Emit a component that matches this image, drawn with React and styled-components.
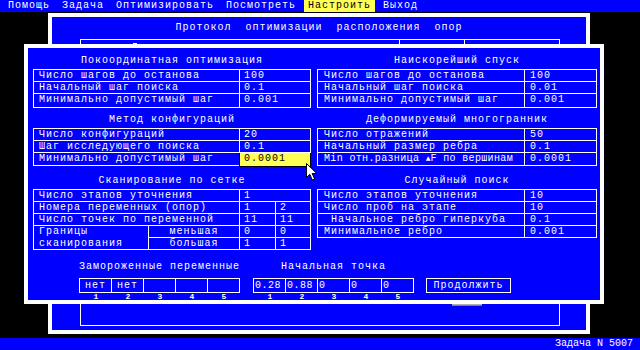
import React from 'react';
import styled, { createGlobalStyle } from 'styled-components';

const BLUE = '#0000ff';
const YELLOW = '#ffff55';
const FONT = '"Liberation Mono", "DejaVu Sans Mono", monospace';

const Global = createGlobalStyle`
  html, body { margin: 0; padding: 0; background: #000; }
  body {
    width: 640px; height: 350px; overflow: hidden;
    font-family: ${FONT}; font-size: 10px; letter-spacing: 1px; color: #fff;
  }
  * { box-sizing: border-box; }
`;

const Screen = styled.div`
  width: 640px; height: 350px; display: flex; flex-direction: column; background: #000;
`;
const MenuBar = styled.div`
  height: 12px; background: ${BLUE}; display: flex; gap: 4px; padding-left: 4px;
  line-height: 12px; white-space: pre;
`;
const MenuItem = styled.span`
  padding: 0 4px;
  background: ${(p) => (p.$active ? YELLOW : 'transparent')};
  color: ${(p) => (p.$active ? '#000' : '#fff')};
`;
const Desktop = styled.div`
  position: relative; flex: 1;
`;
const StatusBar = styled.div`
  height: 12px; background: ${BLUE}; text-align: right; padding-right: 7px; line-height: 12px;
  letter-spacing: 0;
`;

const Window = styled.div`
  position: absolute;
  left: ${(p) => p.$x}px; top: ${(p) => p.$y}px;
  width: ${(p) => p.$w}px; height: ${(p) => p.$h}px;
  background: ${BLUE}; border: 4px solid #fff;
`;

/* background window */
const BgTitle = styled.div`
  height: 22px; line-height: 22px; text-align: center; white-space: pre;
`;
const BgTable = styled.div`
  margin: 0 26px 0 28px; height: 287px; border: 1px solid #fff;
`;
const BgHeader = styled.div`
  display: grid; grid-template-columns: 319px 65px 1fr; height: 14px;
`;
const BgHeadCell = styled.div`
  border-right: ${(p) => (p.$last ? 'none' : '1px solid #fff')};
`;
const Mark = styled.span`
  display: block; width: 4px; height: 2px; background: #fff; margin: 3px 0 0 52px;
`;
const Thumb = styled.div`
  position: absolute; left: 400px; top: 286px; width: 30px; height: 3px;
  background: #b0b0b0; border-bottom: 1px solid #808080;
`;

/* front window */
const Content = styled.div`
  padding: 4px 3px 0 5px;
`;
const SectionRow = styled.div`
  display: flex; gap: 6px; align-items: flex-start; margin-top: ${(p) => p.$mt}px;
`;
const Section = styled.div`
  width: ${(p) => p.$w}px; display: flex; flex-direction: column;
`;
const SectionTitle = styled.div`
  height: 17px; line-height: 17px; text-align: center; white-space: pre;
`;
const Table = styled.div`
  display: grid;
  grid-template-columns: ${(p) => p.$cols};
  grid-template-rows: ${(p) => p.$rows};
  border-top: 1px solid #fff; border-left: 1px solid #fff;
`;
const Cell = styled.div`
  border-right: 1px solid #fff; border-bottom: 1px solid #fff;
  padding-left: ${(p) => (p.$pl !== undefined ? p.$pl : 4)}px;
  line-height: ${(p) => (p.$lh ? p.$lh : 11)}px;
  white-space: pre; overflow: hidden;
  text-align: ${(p) => (p.$center ? 'center' : 'left')};
  grid-column: ${(p) => (p.$cs ? `span ${p.$cs}` : 'auto')};
  grid-row: ${(p) => (p.$rs ? `span ${p.$rs}` : 'auto')};
  letter-spacing: ${(p) => (p.$tight ? '0.35px' : '1px')};
`;
const HotCell = styled(Cell)`
  background: ${YELLOW}; color: #000;
  border-right-color: #000; border-bottom-color: #000;
  box-shadow: -1px 0 0 #000;
  height: 14px;
`;
const Delta = styled.span`
  font-size: 8px; letter-spacing: 0;
`;
const Over = styled.span`
  text-decoration: overline;
`;

const BottomRow = styled.div`
  display: flex; align-items: flex-start; margin-top: 11px; padding-left: 46px;
`;
const Group = styled.div`
  display: flex; flex-direction: column; width: 161px;
  margin-right: ${(p) => p.$mr}px;
`;
const GroupLabel = styled.div`
  height: 12px; line-height: 12px; text-align: center; white-space: pre; margin-bottom: 5px;
`;
const BoxRow = styled.div`
  display: flex; border-top: 1px solid #fff; border-left: 1px solid #fff;
`;
const Box = styled.div`
  width: 32px; height: 14px; line-height: 13px;
  border-right: 1px solid #fff; border-bottom: 1px solid #fff;
  text-align: ${(p) => (p.$center ? 'center' : 'left')};
  padding-left: ${(p) => (p.$center ? 0 : 1)}px;
  letter-spacing: ${(p) => (p.$center ? 1 : 0.5)}px;
`;
const NumRow = styled.div`
  display: flex; padding-left: 1px;
`;
const Num = styled.div`
  width: 32px; text-align: center; font-size: 8px; font-weight: bold;
  line-height: 7px; letter-spacing: 0;
`;
const Button = styled.div`
  margin-top: 17px; width: 85px; height: 15px; border: 1px solid #fff;
  line-height: 13px; text-align: center;
`;
const Cursor = styled.svg`
  position: absolute; left: 278px; top: 115px; width: 12px; height: 18px;
`;

const L_COLS = '206px 71px';
const R_COLS = '207px 72px';

export default function App() {
  return (
    <>
      <Global />
      <Screen>
        <MenuBar>
          <MenuItem>Помощь</MenuItem>
          <MenuItem>Задача</MenuItem>
          <MenuItem>Оптимизировать</MenuItem>
          <MenuItem>Посмотреть</MenuItem>
          <MenuItem $active>Настроить</MenuItem>
          <MenuItem>Выход</MenuItem>
        </MenuBar>
        <Desktop>
          <Window $x={48} $y={1} $w={542} $h={321}>
            <BgTitle>Протокол  оптимизации  расположения  опор</BgTitle>
            <BgTable>
              <BgHeader>
                <BgHeadCell><Mark /></BgHeadCell>
                <BgHeadCell />
                <BgHeadCell $last />
              </BgHeader>
            </BgTable>
            <Thumb />
          </Window>

          <Window $x={24} $y={32} $w={580} $h={260}>
            <Content>
              <SectionRow $mt={0}>
                <Section $w={278}>
                  <SectionTitle>Покоординатная оптимизация</SectionTitle>
                  <Table $cols={L_COLS} $rows="12px 12px 14px">
                    <Cell $pl={5}>Число шагов до останова</Cell>
                    <Cell>100</Cell>
                    <Cell $pl={5}>Начальный шаг поиска</Cell>
                    <Cell>0.1</Cell>
                    <Cell $pl={5}>Минимально допустимый шаг</Cell>
                    <Cell>0.001</Cell>
                  </Table>
                </Section>
                <Section $w={280}>
                  <SectionTitle>Наискорейший спуск</SectionTitle>
                  <Table $cols={R_COLS} $rows="12px 12px 14px">
                    <Cell $pl={6}>Число шагов до останова</Cell>
                    <Cell $pl={5}>100</Cell>
                    <Cell $pl={6}>Начальный шаг поиска</Cell>
                    <Cell $pl={5}>0.01</Cell>
                    <Cell $pl={6}>Минимально допустимый шаг</Cell>
                    <Cell $pl={5}>0.001</Cell>
                  </Table>
                </Section>
              </SectionRow>

              <SectionRow $mt={3}>
                <Section $w={278}>
                  <SectionTitle>Метод конфигураций</SectionTitle>
                  <Table $cols={L_COLS} $rows="12px 12px 13px">
                    <Cell $pl={5}>Число конфигураций</Cell>
                    <Cell>20</Cell>
                    <Cell $pl={5}>Шаг исследующего поиска</Cell>
                    <Cell>0.1</Cell>
                    <Cell $pl={5}>Минимально допустимый шаг</Cell>
                    <HotCell>0.0001</HotCell>
                  </Table>
                </Section>
                <Section $w={280}>
                  <SectionTitle>Деформируемый многогранник</SectionTitle>
                  <Table $cols={R_COLS} $rows="12px 12px 13px">
                    <Cell $pl={6}>Число отражений</Cell>
                    <Cell $pl={5}>50</Cell>
                    <Cell $pl={6}>Начальный размер ребра</Cell>
                    <Cell $pl={5}>0.1</Cell>
                    <Cell $pl={6} $tight>
                      Min отн.разница <Delta>▲</Delta><Over>F</Over> по вершинам
                    </Cell>
                    <Cell $pl={5}>0.0001</Cell>
                  </Table>
                </Section>
              </SectionRow>

              <SectionRow $mt={6}>
                <Section $w={278}>
                  <SectionTitle>Сканирование по сетке</SectionTitle>
                  <Table $cols="115px 91px 36px 35px" $rows="12px 12px 12px 12px 12px">
                    <Cell $pl={5} $cs={2}>Число этапов уточнения</Cell>
                    <Cell $cs={2}>1</Cell>
                    <Cell $pl={5} $cs={2}>Номера переменных (опор)</Cell>
                    <Cell>1</Cell>
                    <Cell>2</Cell>
                    <Cell $pl={5} $cs={2}>Число точек по переменной</Cell>
                    <Cell>11</Cell>
                    <Cell>11</Cell>
                    <Cell $pl={5} $rs={2} $lh={12}>{'Границы\nсканирования'}</Cell>
                    <Cell $pl={0} $center>меньшая</Cell>
                    <Cell>0</Cell>
                    <Cell>0</Cell>
                    <Cell $pl={0} $center>большая</Cell>
                    <Cell>1</Cell>
                    <Cell>1</Cell>
                  </Table>
                </Section>
                <Section $w={280}>
                  <SectionTitle>Случайный поиск</SectionTitle>
                  <Table $cols={R_COLS} $rows="12px 12px 12px 12px">
                    <Cell $pl={6}>Число этапов уточнения</Cell>
                    <Cell $pl={5}>10</Cell>
                    <Cell $pl={6}>Число проб на этапе</Cell>
                    <Cell $pl={5}>10</Cell>
                    <Cell $pl={6}> Начальное ребро гиперкуба</Cell>
                    <Cell $pl={5}>0.1</Cell>
                    <Cell $pl={6}>Минимальное ребро</Cell>
                    <Cell $pl={5}>0.001</Cell>
                  </Table>
                </Section>
              </SectionRow>

              <BottomRow>
                <Group $mr={13}>
                  <GroupLabel>Замороженные переменные</GroupLabel>
                  <BoxRow>
                    {['нет', 'нет', '', '', ''].map((v, i) => (
                      <Box key={i} $center>{v}</Box>
                    ))}
                  </BoxRow>
                  <NumRow>
                    {[1, 2, 3, 4, 5].map((n) => (
                      <Num key={n}>{n}</Num>
                    ))}
                  </NumRow>
                </Group>
                <Group $mr={12}>
                  <GroupLabel>Начальная точка</GroupLabel>
                  <BoxRow>
                    {['0.28', '0.88', '0', '0', '0'].map((v, i) => (
                      <Box key={i}>{v}</Box>
                    ))}
                  </BoxRow>
                  <NumRow>
                    {[1, 2, 3, 4, 5].map((n) => (
                      <Num key={n}>{n}</Num>
                    ))}
                  </NumRow>
                </Group>
                <Button>Продолжить</Button>
              </BottomRow>
            </Content>
            <Cursor viewBox="0 0 12 18">
              <path
                d="M0.5 0.5 L0.5 14.5 L3.8 11.3 L6.3 17 L8.6 16 L6.2 10.5 L10.8 10.5 Z"
                fill="#fff"
                stroke="#000"
                strokeWidth="1"
              />
            </Cursor>
          </Window>
        </Desktop>
        <StatusBar>Задача N 5007</StatusBar>
      </Screen>
    </>
  );
}
